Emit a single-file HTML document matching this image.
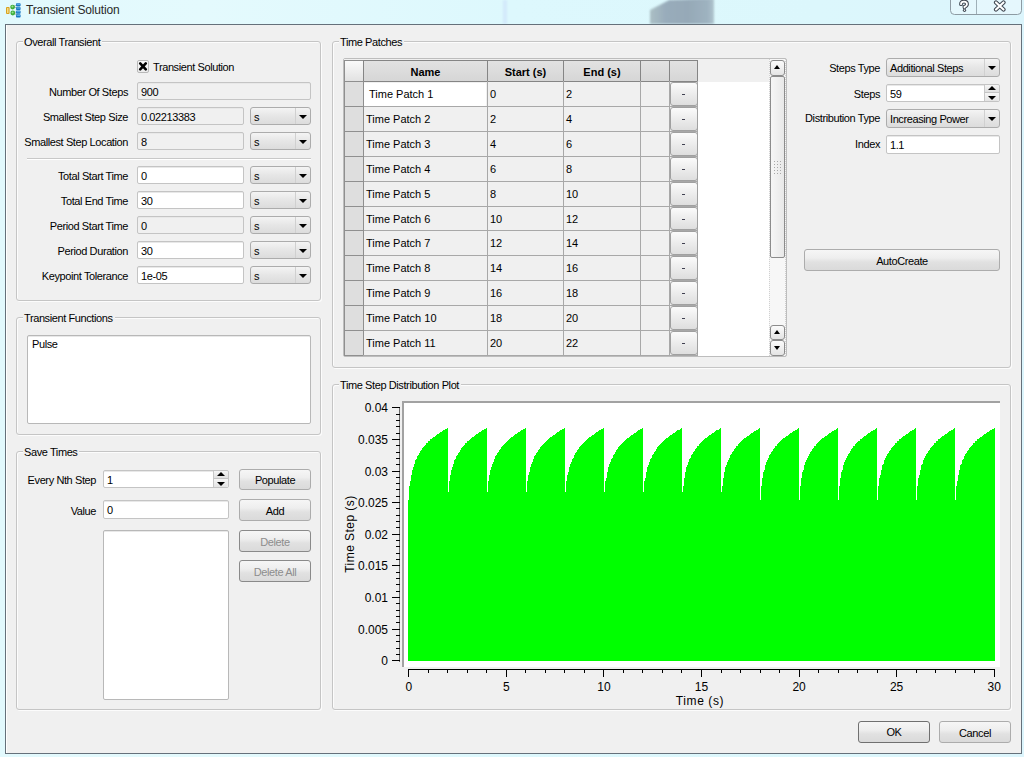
<!DOCTYPE html><html><head><meta charset="utf-8"><title>Transient Solution</title><style>
*{box-sizing:border-box;margin:0;padding:0}
html,body{width:1024px;height:757px;overflow:hidden}
body{position:relative;font-family:"Liberation Sans",sans-serif;font-size:11px;color:#000;
 background:linear-gradient(90deg,#e2f9fd 0%,#e4fafd 20%,#ddf8fd 50%,#dcf7fc 80%,#dcf5fc 100%)}
.a{position:absolute}
.t{position:absolute;white-space:nowrap;font-size:11px;line-height:13px;letter-spacing:-0.4px}
.r{text-align:right}
.win{position:absolute;left:5px;top:24px;width:1017px;height:730px;background:#f0f0f0;border:1px solid #65707a;box-shadow:inset 1px 0 0 #fff}
.gb{position:absolute;border:1px solid #c5c5c5;border-radius:3px;box-shadow:1px 1px 0 #fcfcfc, inset 1px 1px 0 #fcfcfc}
.gbt{position:absolute;background:#f0f0f0;padding:0 2px 0 1px;white-space:nowrap;line-height:13px;letter-spacing:-0.4px}
.le{position:absolute;background:#fff;border:1px solid #c4c4c4;border-radius:2px;box-shadow:inset 0 1px 0 #e8e8e8}
.le.ro{background:#f0f0f0}
.cb{position:absolute;border:1px solid #acacac;border-radius:3px;background:linear-gradient(#f4f4f4,#e6e6e6 50%,#dcdcdc)}
.cb .dv{position:absolute;top:0;bottom:0;width:1px;background:#d0d0d0}
.arr{position:absolute;width:0;height:0;border-left:3.5px solid transparent;border-right:3.5px solid transparent;border-top:4px solid #000}
.arru{position:absolute;width:0;height:0;border-left:3.5px solid transparent;border-right:3.5px solid transparent;border-bottom:4px solid #000}
.bt{position:absolute;border:1px solid #acacac;border-radius:3px;background:linear-gradient(#f6f6f6 0%,#eeeeee 40%,#e1e1e1 60%,#dadada 100%);text-align:center;white-space:nowrap;letter-spacing:-0.4px}
.bt.dis{border-color:#8a8a8a;color:#8d8d8d}
.cell{position:absolute;white-space:nowrap;letter-spacing:-0.4px;line-height:13px}
</style></head><body>
<div class="a" style="left:640px;top:-6px;width:90px;height:30px;filter:blur(1.3px);opacity:0.85"><div class="a" style="left:10px;top:0;width:64px;height:30px;background:linear-gradient(90deg,#a3b6bb,#8d9fb0 25%,#8a9cac 60%,#94a7b6 90%,#a9bcc6);clip-path:polygon(0 53%,30% 20%,100% 14%,100% 100%,0 100%)"></div></div>
<div class="a" style="left:503px;top:0;width:4px;height:24px;background:#cfe4fb;filter:blur(1px);opacity:0.7"></div>
<svg class="a" style="left:0;top:0" width="24" height="22"><rect x="6" y="7" width="3.6" height="7" rx="1" fill="#d9a21e"/><rect x="7.2" y="8" width="1.2" height="5" fill="#fbe9a0"/><path d="M12.5,7 L18,4.5 M12.5,7 L18,8 M12.5,13 L18,11.5 M12.5,13 L18,15" stroke="#9aa6a0" stroke-width="0.8"/><circle cx="12.6" cy="7.1" r="2.4" fill="#3fae3a"/><circle cx="12.4" cy="6.6" r="1" fill="#9be28f"/><circle cx="12.8" cy="13" r="2.4" fill="#3fae3a"/><circle cx="12.6" cy="12.5" r="1" fill="#9be28f"/><rect x="16" y="3.2" width="4.6" height="3.2" rx="0.8" fill="#1b78c4"/><rect x="16" y="6.9" width="4.6" height="3.2" rx="0.8" fill="#1b78c4"/><rect x="16" y="10.6" width="4.6" height="3.2" rx="0.8" fill="#1b78c4"/><rect x="16" y="14.3" width="4.6" height="3.2" rx="0.8" fill="#1b78c4"/><rect x="16.6" y="3.8" width="3.4" height="1" fill="#5fb4ea"/><rect x="16.6" y="7.5" width="3.4" height="1" fill="#5fb4ea"/><rect x="16.6" y="11.2" width="3.4" height="1" fill="#5fb4ea"/><rect x="16.6" y="14.9" width="3.4" height="1" fill="#5fb4ea"/></svg>
<div class="t" style="left:26px;top:3px;font-size:12px;line-height:14px;letter-spacing:-0.15px;color:#2a2a2a">Transient Solution</div>
<svg class="a" style="left:940px;top:0" width="84" height="24"><path d="M10.5,-2 V10.5 Q10.5,14.5 14.5,14.5 H77.5 Q81.5,14.5 81.5,10.5 V-2" fill="rgba(255,255,255,0.25)" stroke="#8d9ba3" stroke-width="1"/><path d="M36.5,0 V14" stroke="#9fb0b8" stroke-width="1"/><path d="M21,4.2 Q21,1.6 24,1.6 Q27,1.6 27,4.2 Q27,5.8 24.5,6.8 V7.6" fill="none" stroke="#3e4650" stroke-width="3.8" stroke-linecap="round"/><path d="M21,4.2 Q21,1.6 24,1.6 Q27,1.6 27,4.2 Q27,5.8 24.5,6.8 V7.6" fill="none" stroke="#fff" stroke-width="1.8" stroke-linecap="round"/><circle cx="24.5" cy="10.3" r="1.6" fill="#3e4650"/><circle cx="24.5" cy="10.3" r="0.7" fill="#fff"/><path d="M56,2.5 L63.5,9.5 M63.5,2.5 L56,9.5" stroke="#3e4650" stroke-width="4.2" stroke-linecap="round"/><path d="M56,2.5 L63.5,9.5 M63.5,2.5 L56,9.5" stroke="#fff" stroke-width="2.2" stroke-linecap="round"/></svg>
<div class="win"></div>
<div class="gb" style="left:16px;top:41px;width:305px;height:260px"></div>
<div class="gbt" style="left:23px;top:36px">Overall Transient</div>
<div class="a" style="left:137px;top:60px;width:12px;height:13px;border:1px solid #b8b8b8;border-radius:2px;background:linear-gradient(#fafafa,#ececec)"></div>
<svg class="a" style="left:137px;top:60px" width="12" height="13"><path d="M3.2,3.4 L8.8,9.4 M8.8,3.4 L3.2,9.4" stroke="#000" stroke-width="2.6" stroke-linecap="round"/></svg>
<div class="t" style="left:153px;top:61px;">Transient Solution</div>
<div class="t r" style="right:896px;top:86px;">Number Of Steps</div>
<div class="le ro" style="left:137px;top:82px;width:174px;height:18px"></div>
<div class="t" style="left:141px;top:86px;">900</div>
<div class="t r" style="right:896px;top:111px;">Smallest Step Size</div>
<div class="le ro" style="left:137px;top:107px;width:107px;height:18px"></div>
<div class="t" style="left:141px;top:111px;">0.02213383</div>
<div class="cb" style="left:250px;top:107px;width:61px;height:18px"><div class="dv" style="left:44px"></div></div>
<div class="arr" style="left:299px;top:115px;border-left-width:4px;border-right-width:4px"></div>
<div class="t" style="left:254px;top:111px;">s</div>
<div class="t r" style="right:896px;top:136px;">Smallest Step Location</div>
<div class="le ro" style="left:137px;top:132px;width:107px;height:18px"></div>
<div class="t" style="left:141px;top:136px;">8</div>
<div class="cb" style="left:250px;top:132px;width:61px;height:18px"><div class="dv" style="left:44px"></div></div>
<div class="arr" style="left:299px;top:140px;border-left-width:4px;border-right-width:4px"></div>
<div class="t" style="left:254px;top:136px;">s</div>
<div class="t r" style="right:896px;top:170px;">Total Start Time</div>
<div class="le" style="left:137px;top:166px;width:107px;height:18px"></div>
<div class="t" style="left:141px;top:170px;">0</div>
<div class="cb" style="left:250px;top:166px;width:61px;height:18px"><div class="dv" style="left:44px"></div></div>
<div class="arr" style="left:299px;top:174px;border-left-width:4px;border-right-width:4px"></div>
<div class="t" style="left:254px;top:170px;">s</div>
<div class="t r" style="right:896px;top:195px;">Total End Time</div>
<div class="le" style="left:137px;top:191px;width:107px;height:18px"></div>
<div class="t" style="left:141px;top:195px;">30</div>
<div class="cb" style="left:250px;top:191px;width:61px;height:18px"><div class="dv" style="left:44px"></div></div>
<div class="arr" style="left:299px;top:199px;border-left-width:4px;border-right-width:4px"></div>
<div class="t" style="left:254px;top:195px;">s</div>
<div class="t r" style="right:896px;top:220px;">Period Start Time</div>
<div class="le ro" style="left:137px;top:216px;width:107px;height:18px"></div>
<div class="t" style="left:141px;top:220px;">0</div>
<div class="cb" style="left:250px;top:216px;width:61px;height:18px"><div class="dv" style="left:44px"></div></div>
<div class="arr" style="left:299px;top:224px;border-left-width:4px;border-right-width:4px"></div>
<div class="t" style="left:254px;top:220px;">s</div>
<div class="t r" style="right:896px;top:245px;">Period Duration</div>
<div class="le" style="left:137px;top:241px;width:107px;height:18px"></div>
<div class="t" style="left:141px;top:245px;">30</div>
<div class="cb" style="left:250px;top:241px;width:61px;height:18px"><div class="dv" style="left:44px"></div></div>
<div class="arr" style="left:299px;top:249px;border-left-width:4px;border-right-width:4px"></div>
<div class="t" style="left:254px;top:245px;">s</div>
<div class="t r" style="right:896px;top:270px;">Keypoint Tolerance</div>
<div class="le" style="left:137px;top:266px;width:107px;height:18px"></div>
<div class="t" style="left:141px;top:270px;">1e-05</div>
<div class="cb" style="left:250px;top:266px;width:61px;height:18px"><div class="dv" style="left:44px"></div></div>
<div class="arr" style="left:299px;top:274px;border-left-width:4px;border-right-width:4px"></div>
<div class="t" style="left:254px;top:270px;">s</div>
<div class="a" style="left:27px;top:158px;width:284px;height:1px;background:#c8c8c8;box-shadow:0 1px 0 #fff"></div>
<div class="gb" style="left:16px;top:317px;width:305px;height:118px"></div>
<div class="gbt" style="left:23px;top:312px">Transient Functions</div>
<div class="le" style="left:27px;top:335px;width:284px;height:89px;border-color:#b8b8b8"></div>
<div class="t" style="left:32px;top:338px;">Pulse</div>
<div class="gb" style="left:16px;top:451px;width:305px;height:259px"></div>
<div class="gbt" style="left:23px;top:446px">Save Times</div>
<div class="t r" style="right:928px;top:474px;">Every Nth Step</div>
<div class="le" style="left:103px;top:470px;width:126px;height:18px"></div>
<div class="a" style="left:213px;top:471px;width:15px;height:8px;background:linear-gradient(#f6f6f6,#e0e0e0);border-left:1px solid #c8c8c8;border-bottom:1px solid #c4c4c4;border-radius:0 2px 0 0"></div>
<div class="a" style="left:213px;top:479px;width:15px;height:8px;background:linear-gradient(#f6f6f6,#e4e4e4);border-left:1px solid #c8c8c8;border-radius:0 0 2px 0"></div>
<div class="arru" style="left:217px;top:472px;border-left-width:4px;border-right-width:4px"></div>
<div class="arr" style="left:217px;top:482px;border-left-width:4px;border-right-width:4px"></div>
<div class="t" style="left:107px;top:474px;">1</div>
<div class="bt" style="left:239px;top:469px;width:72px;height:21px;line-height:19px;padding-top:1px">Populate</div>
<div class="t r" style="right:928px;top:505px;">Value</div>
<div class="le" style="left:103px;top:500px;width:126px;height:19px"></div>
<div class="t" style="left:107px;top:504px;">0</div>
<div class="bt" style="left:239px;top:499px;width:72px;height:22px;line-height:20px;padding-top:1px">Add</div>
<div class="le" style="left:103px;top:530px;width:126px;height:170px;border-color:#b8b8b8"></div>
<div class="bt dis" style="left:239px;top:530px;width:72px;height:22px;line-height:20px;padding-top:1px">Delete</div>
<div class="bt dis" style="left:239px;top:560px;width:72px;height:22px;line-height:20px;padding-top:1px">Delete All</div>
<div class="gb" style="left:332px;top:41px;width:679px;height:327px"></div>
<div class="gbt" style="left:339px;top:36px">Time Patches</div>
<div class="a" style="left:343px;top:58px;width:444px;height:299px;border:1px solid #bdbdbd;border-radius:2px;background:#fff"></div>
<div class="a" style="left:344px;top:59px;width:426px;height:23px;background:#f0f0f0"></div>
<div class="a" style="left:344px;top:60px;width:20px;height:22px;border:1px solid #8f8f8f;background:linear-gradient(#fafafa,#e2e2e2)"></div>
<div class="a" style="left:363px;top:60px;width:125px;height:22px;border:1px solid #858585;background:linear-gradient(#e2e2e2,#d6d6d6);font-weight:bold;text-align:center;line-height:20px;padding-top:1px;letter-spacing:0">Name</div>
<div class="a" style="left:487px;top:60px;width:77px;height:22px;border:1px solid #858585;background:linear-gradient(#e2e2e2,#d6d6d6);font-weight:bold;text-align:center;line-height:20px;padding-top:1px;letter-spacing:0">Start (s)</div>
<div class="a" style="left:563px;top:60px;width:78px;height:22px;border:1px solid #858585;background:linear-gradient(#e2e2e2,#d6d6d6);font-weight:bold;text-align:center;line-height:20px;padding-top:1px;letter-spacing:0">End (s)</div>
<div class="a" style="left:640px;top:60px;width:30px;height:22px;border:1px solid #858585;background:linear-gradient(#e2e2e2,#d6d6d6);font-weight:bold;text-align:center;line-height:20px;padding-top:1px;letter-spacing:0"></div>
<div class="a" style="left:669px;top:60px;width:29px;height:22px;border:1px solid #858585;background:linear-gradient(#e2e2e2,#d6d6d6);font-weight:bold;text-align:center;line-height:20px;padding-top:1px;letter-spacing:0"></div>
<div class="a" style="left:344px;top:81px;width:20px;height:26px;border:1px solid #8f8f8f;background:#dedede"></div>
<div class="a" style="left:364px;top:82px;width:334px;height:24px;background:#f0f0f0"></div>
<div class="a" style="left:363px;top:106px;width:335px;height:1px;background:#a8a8a8"></div>
<div class="a" style="left:487px;top:81px;width:1px;height:26px;background:#a8a8a8"></div>
<div class="a" style="left:563px;top:81px;width:1px;height:26px;background:#a8a8a8"></div>
<div class="a" style="left:640px;top:81px;width:1px;height:26px;background:#a8a8a8"></div>
<div class="a" style="left:669px;top:81px;width:1px;height:26px;background:#a8a8a8"></div>
<div class="a" style="left:697px;top:81px;width:1px;height:26px;background:#a8a8a8"></div>
<div class="a" style="left:670px;top:82px;width:28px;height:24px;border:1px solid #a0a0a0;border-radius:3px;background:linear-gradient(#fbfbfb,#ececec 50%,#dedede)"></div>
<div class="a" style="left:682px;top:94px;width:3px;height:1px;background:#404050"></div>
<div class="a" style="left:364px;top:83px;width:122px;height:23px;background:#fff;border-radius:1px"></div>
<div class="t" style="left:369px;top:88px;letter-spacing:0">Time Patch 1</div>
<div class="t" style="left:490px;top:88px;letter-spacing:0">0</div>
<div class="t" style="left:566px;top:88px;letter-spacing:0">2</div>
<div class="a" style="left:344px;top:106px;width:20px;height:26px;border:1px solid #8f8f8f;background:#dedede"></div>
<div class="a" style="left:364px;top:107px;width:334px;height:24px;background:#f0f0f0"></div>
<div class="a" style="left:363px;top:131px;width:335px;height:1px;background:#a8a8a8"></div>
<div class="a" style="left:487px;top:106px;width:1px;height:26px;background:#a8a8a8"></div>
<div class="a" style="left:563px;top:106px;width:1px;height:26px;background:#a8a8a8"></div>
<div class="a" style="left:640px;top:106px;width:1px;height:26px;background:#a8a8a8"></div>
<div class="a" style="left:669px;top:106px;width:1px;height:26px;background:#a8a8a8"></div>
<div class="a" style="left:697px;top:106px;width:1px;height:26px;background:#a8a8a8"></div>
<div class="a" style="left:670px;top:107px;width:28px;height:24px;border:1px solid #a0a0a0;border-radius:3px;background:linear-gradient(#fbfbfb,#ececec 50%,#dedede)"></div>
<div class="a" style="left:682px;top:119px;width:3px;height:1px;background:#404050"></div>
<div class="t" style="left:366px;top:113px;letter-spacing:0">Time Patch 2</div>
<div class="t" style="left:490px;top:113px;letter-spacing:0">2</div>
<div class="t" style="left:566px;top:113px;letter-spacing:0">4</div>
<div class="a" style="left:344px;top:131px;width:20px;height:26px;border:1px solid #8f8f8f;background:#dedede"></div>
<div class="a" style="left:364px;top:132px;width:334px;height:24px;background:#f0f0f0"></div>
<div class="a" style="left:363px;top:156px;width:335px;height:1px;background:#a8a8a8"></div>
<div class="a" style="left:487px;top:131px;width:1px;height:26px;background:#a8a8a8"></div>
<div class="a" style="left:563px;top:131px;width:1px;height:26px;background:#a8a8a8"></div>
<div class="a" style="left:640px;top:131px;width:1px;height:26px;background:#a8a8a8"></div>
<div class="a" style="left:669px;top:131px;width:1px;height:26px;background:#a8a8a8"></div>
<div class="a" style="left:697px;top:131px;width:1px;height:26px;background:#a8a8a8"></div>
<div class="a" style="left:670px;top:132px;width:28px;height:24px;border:1px solid #a0a0a0;border-radius:3px;background:linear-gradient(#fbfbfb,#ececec 50%,#dedede)"></div>
<div class="a" style="left:682px;top:144px;width:3px;height:1px;background:#404050"></div>
<div class="t" style="left:366px;top:138px;letter-spacing:0">Time Patch 3</div>
<div class="t" style="left:490px;top:138px;letter-spacing:0">4</div>
<div class="t" style="left:566px;top:138px;letter-spacing:0">6</div>
<div class="a" style="left:344px;top:156px;width:20px;height:26px;border:1px solid #8f8f8f;background:#dedede"></div>
<div class="a" style="left:364px;top:157px;width:334px;height:24px;background:#f0f0f0"></div>
<div class="a" style="left:363px;top:181px;width:335px;height:1px;background:#a8a8a8"></div>
<div class="a" style="left:487px;top:156px;width:1px;height:26px;background:#a8a8a8"></div>
<div class="a" style="left:563px;top:156px;width:1px;height:26px;background:#a8a8a8"></div>
<div class="a" style="left:640px;top:156px;width:1px;height:26px;background:#a8a8a8"></div>
<div class="a" style="left:669px;top:156px;width:1px;height:26px;background:#a8a8a8"></div>
<div class="a" style="left:697px;top:156px;width:1px;height:26px;background:#a8a8a8"></div>
<div class="a" style="left:670px;top:157px;width:28px;height:24px;border:1px solid #a0a0a0;border-radius:3px;background:linear-gradient(#fbfbfb,#ececec 50%,#dedede)"></div>
<div class="a" style="left:682px;top:169px;width:3px;height:1px;background:#404050"></div>
<div class="t" style="left:366px;top:163px;letter-spacing:0">Time Patch 4</div>
<div class="t" style="left:490px;top:163px;letter-spacing:0">6</div>
<div class="t" style="left:566px;top:163px;letter-spacing:0">8</div>
<div class="a" style="left:344px;top:181px;width:20px;height:26px;border:1px solid #8f8f8f;background:#dedede"></div>
<div class="a" style="left:364px;top:182px;width:334px;height:24px;background:#f0f0f0"></div>
<div class="a" style="left:363px;top:206px;width:335px;height:1px;background:#a8a8a8"></div>
<div class="a" style="left:487px;top:181px;width:1px;height:26px;background:#a8a8a8"></div>
<div class="a" style="left:563px;top:181px;width:1px;height:26px;background:#a8a8a8"></div>
<div class="a" style="left:640px;top:181px;width:1px;height:26px;background:#a8a8a8"></div>
<div class="a" style="left:669px;top:181px;width:1px;height:26px;background:#a8a8a8"></div>
<div class="a" style="left:697px;top:181px;width:1px;height:26px;background:#a8a8a8"></div>
<div class="a" style="left:670px;top:182px;width:28px;height:24px;border:1px solid #a0a0a0;border-radius:3px;background:linear-gradient(#fbfbfb,#ececec 50%,#dedede)"></div>
<div class="a" style="left:682px;top:194px;width:3px;height:1px;background:#404050"></div>
<div class="t" style="left:366px;top:188px;letter-spacing:0">Time Patch 5</div>
<div class="t" style="left:490px;top:188px;letter-spacing:0">8</div>
<div class="t" style="left:566px;top:188px;letter-spacing:0">10</div>
<div class="a" style="left:344px;top:206px;width:20px;height:25px;border:1px solid #8f8f8f;background:#dedede"></div>
<div class="a" style="left:364px;top:207px;width:334px;height:23px;background:#f0f0f0"></div>
<div class="a" style="left:363px;top:230px;width:335px;height:1px;background:#a8a8a8"></div>
<div class="a" style="left:487px;top:206px;width:1px;height:25px;background:#a8a8a8"></div>
<div class="a" style="left:563px;top:206px;width:1px;height:25px;background:#a8a8a8"></div>
<div class="a" style="left:640px;top:206px;width:1px;height:25px;background:#a8a8a8"></div>
<div class="a" style="left:669px;top:206px;width:1px;height:25px;background:#a8a8a8"></div>
<div class="a" style="left:697px;top:206px;width:1px;height:25px;background:#a8a8a8"></div>
<div class="a" style="left:670px;top:207px;width:28px;height:23px;border:1px solid #a0a0a0;border-radius:3px;background:linear-gradient(#fbfbfb,#ececec 50%,#dedede)"></div>
<div class="a" style="left:682px;top:219px;width:3px;height:1px;background:#404050"></div>
<div class="t" style="left:366px;top:213px;letter-spacing:0">Time Patch 6</div>
<div class="t" style="left:490px;top:213px;letter-spacing:0">10</div>
<div class="t" style="left:566px;top:213px;letter-spacing:0">12</div>
<div class="a" style="left:344px;top:230px;width:20px;height:26px;border:1px solid #8f8f8f;background:#dedede"></div>
<div class="a" style="left:364px;top:231px;width:334px;height:24px;background:#f0f0f0"></div>
<div class="a" style="left:363px;top:255px;width:335px;height:1px;background:#a8a8a8"></div>
<div class="a" style="left:487px;top:230px;width:1px;height:26px;background:#a8a8a8"></div>
<div class="a" style="left:563px;top:230px;width:1px;height:26px;background:#a8a8a8"></div>
<div class="a" style="left:640px;top:230px;width:1px;height:26px;background:#a8a8a8"></div>
<div class="a" style="left:669px;top:230px;width:1px;height:26px;background:#a8a8a8"></div>
<div class="a" style="left:697px;top:230px;width:1px;height:26px;background:#a8a8a8"></div>
<div class="a" style="left:670px;top:231px;width:28px;height:24px;border:1px solid #a0a0a0;border-radius:3px;background:linear-gradient(#fbfbfb,#ececec 50%,#dedede)"></div>
<div class="a" style="left:682px;top:243px;width:3px;height:1px;background:#404050"></div>
<div class="t" style="left:366px;top:237px;letter-spacing:0">Time Patch 7</div>
<div class="t" style="left:490px;top:237px;letter-spacing:0">12</div>
<div class="t" style="left:566px;top:237px;letter-spacing:0">14</div>
<div class="a" style="left:344px;top:255px;width:20px;height:26px;border:1px solid #8f8f8f;background:#dedede"></div>
<div class="a" style="left:364px;top:256px;width:334px;height:24px;background:#f0f0f0"></div>
<div class="a" style="left:363px;top:280px;width:335px;height:1px;background:#a8a8a8"></div>
<div class="a" style="left:487px;top:255px;width:1px;height:26px;background:#a8a8a8"></div>
<div class="a" style="left:563px;top:255px;width:1px;height:26px;background:#a8a8a8"></div>
<div class="a" style="left:640px;top:255px;width:1px;height:26px;background:#a8a8a8"></div>
<div class="a" style="left:669px;top:255px;width:1px;height:26px;background:#a8a8a8"></div>
<div class="a" style="left:697px;top:255px;width:1px;height:26px;background:#a8a8a8"></div>
<div class="a" style="left:670px;top:256px;width:28px;height:24px;border:1px solid #a0a0a0;border-radius:3px;background:linear-gradient(#fbfbfb,#ececec 50%,#dedede)"></div>
<div class="a" style="left:682px;top:268px;width:3px;height:1px;background:#404050"></div>
<div class="t" style="left:366px;top:262px;letter-spacing:0">Time Patch 8</div>
<div class="t" style="left:490px;top:262px;letter-spacing:0">14</div>
<div class="t" style="left:566px;top:262px;letter-spacing:0">16</div>
<div class="a" style="left:344px;top:280px;width:20px;height:26px;border:1px solid #8f8f8f;background:#dedede"></div>
<div class="a" style="left:364px;top:281px;width:334px;height:24px;background:#f0f0f0"></div>
<div class="a" style="left:363px;top:305px;width:335px;height:1px;background:#a8a8a8"></div>
<div class="a" style="left:487px;top:280px;width:1px;height:26px;background:#a8a8a8"></div>
<div class="a" style="left:563px;top:280px;width:1px;height:26px;background:#a8a8a8"></div>
<div class="a" style="left:640px;top:280px;width:1px;height:26px;background:#a8a8a8"></div>
<div class="a" style="left:669px;top:280px;width:1px;height:26px;background:#a8a8a8"></div>
<div class="a" style="left:697px;top:280px;width:1px;height:26px;background:#a8a8a8"></div>
<div class="a" style="left:670px;top:281px;width:28px;height:24px;border:1px solid #a0a0a0;border-radius:3px;background:linear-gradient(#fbfbfb,#ececec 50%,#dedede)"></div>
<div class="a" style="left:682px;top:293px;width:3px;height:1px;background:#404050"></div>
<div class="t" style="left:366px;top:287px;letter-spacing:0">Time Patch 9</div>
<div class="t" style="left:490px;top:287px;letter-spacing:0">16</div>
<div class="t" style="left:566px;top:287px;letter-spacing:0">18</div>
<div class="a" style="left:344px;top:305px;width:20px;height:26px;border:1px solid #8f8f8f;background:#dedede"></div>
<div class="a" style="left:364px;top:306px;width:334px;height:24px;background:#f0f0f0"></div>
<div class="a" style="left:363px;top:330px;width:335px;height:1px;background:#a8a8a8"></div>
<div class="a" style="left:487px;top:305px;width:1px;height:26px;background:#a8a8a8"></div>
<div class="a" style="left:563px;top:305px;width:1px;height:26px;background:#a8a8a8"></div>
<div class="a" style="left:640px;top:305px;width:1px;height:26px;background:#a8a8a8"></div>
<div class="a" style="left:669px;top:305px;width:1px;height:26px;background:#a8a8a8"></div>
<div class="a" style="left:697px;top:305px;width:1px;height:26px;background:#a8a8a8"></div>
<div class="a" style="left:670px;top:306px;width:28px;height:24px;border:1px solid #a0a0a0;border-radius:3px;background:linear-gradient(#fbfbfb,#ececec 50%,#dedede)"></div>
<div class="a" style="left:682px;top:318px;width:3px;height:1px;background:#404050"></div>
<div class="t" style="left:366px;top:312px;letter-spacing:0">Time Patch 10</div>
<div class="t" style="left:490px;top:312px;letter-spacing:0">18</div>
<div class="t" style="left:566px;top:312px;letter-spacing:0">20</div>
<div class="a" style="left:344px;top:330px;width:20px;height:26px;border:1px solid #8f8f8f;background:#dedede"></div>
<div class="a" style="left:364px;top:331px;width:334px;height:24px;background:#f0f0f0"></div>
<div class="a" style="left:363px;top:355px;width:335px;height:1px;background:#a8a8a8"></div>
<div class="a" style="left:487px;top:330px;width:1px;height:26px;background:#a8a8a8"></div>
<div class="a" style="left:563px;top:330px;width:1px;height:26px;background:#a8a8a8"></div>
<div class="a" style="left:640px;top:330px;width:1px;height:26px;background:#a8a8a8"></div>
<div class="a" style="left:669px;top:330px;width:1px;height:26px;background:#a8a8a8"></div>
<div class="a" style="left:697px;top:330px;width:1px;height:26px;background:#a8a8a8"></div>
<div class="a" style="left:670px;top:331px;width:28px;height:24px;border:1px solid #a0a0a0;border-radius:3px;background:linear-gradient(#fbfbfb,#ececec 50%,#dedede)"></div>
<div class="a" style="left:682px;top:343px;width:3px;height:1px;background:#404050"></div>
<div class="t" style="left:366px;top:337px;letter-spacing:0">Time Patch 11</div>
<div class="t" style="left:490px;top:337px;letter-spacing:0">20</div>
<div class="t" style="left:566px;top:337px;letter-spacing:0">22</div>
<div class="a" style="left:769px;top:59px;width:17px;height:297px;background:#f7f7f7;border-left:1px dotted #d0d0d0;border-right:1px dotted #d0d0d0"></div>
<div class="a" style="left:770px;top:60px;width:15px;height:16px;border:1px solid #8c8c8c;border-radius:3px;background:linear-gradient(#fbfbfb,#e4e4e4)"></div>
<div class="arru" style="left:774px;top:65px"></div>
<div class="a" style="left:770px;top:76px;width:15px;height:182px;border:1px solid #8c8c8c;border-radius:2px;background:linear-gradient(90deg,#f6f6f6,#e8e8e8)"></div>
<div class="a" style="left:773px;top:160px;width:9px;height:15px;background-image:radial-gradient(circle,#a8a8a8 0.7px,transparent 0.8px);background-size:3px 3px"></div>
<div class="a" style="left:770px;top:325px;width:15px;height:15px;border:1px solid #8c8c8c;border-radius:3px;background:linear-gradient(#fbfbfb,#e4e4e4)"></div>
<div class="arru" style="left:774px;top:330px"></div>
<div class="a" style="left:770px;top:340px;width:15px;height:16px;border:1px solid #8c8c8c;border-radius:3px;background:linear-gradient(#fbfbfb,#e4e4e4)"></div>
<div class="arr" style="left:774px;top:346px"></div>
<div class="t r" style="right:144px;top:62px;">Steps Type</div>
<div class="cb" style="left:886px;top:58px;width:114px;height:19px"><div class="dv" style="left:97px"></div></div>
<div class="arr" style="left:988px;top:66px;border-left-width:4px;border-right-width:4px"></div>
<div class="t" style="left:890px;top:62px;">Additional Steps</div>
<div class="t r" style="right:144px;top:88px;">Steps</div>
<div class="le" style="left:886px;top:84px;width:114px;height:18px"></div>
<div class="a" style="left:984px;top:85px;width:15px;height:8px;background:linear-gradient(#f6f6f6,#e0e0e0);border-left:1px solid #c8c8c8;border-bottom:1px solid #c4c4c4;border-radius:0 2px 0 0"></div>
<div class="a" style="left:984px;top:93px;width:15px;height:8px;background:linear-gradient(#f6f6f6,#e4e4e4);border-left:1px solid #c8c8c8;border-radius:0 0 2px 0"></div>
<div class="arru" style="left:988px;top:86px;border-left-width:4px;border-right-width:4px"></div>
<div class="arr" style="left:988px;top:96px;border-left-width:4px;border-right-width:4px"></div>
<div class="t" style="left:890px;top:88px;">59</div>
<div class="t r" style="right:144px;top:112px;">Distribution Type</div>
<div class="cb" style="left:886px;top:109px;width:114px;height:19px"><div class="dv" style="left:97px"></div></div>
<div class="arr" style="left:988px;top:117px;border-left-width:4px;border-right-width:4px"></div>
<div class="t" style="left:890px;top:113px;">Increasing Power</div>
<div class="t r" style="right:144px;top:138px;">Index</div>
<div class="le" style="left:886px;top:135px;width:114px;height:19px"></div>
<div class="t" style="left:890px;top:139px;">1.1</div>
<div class="bt" style="left:804px;top:249px;width:196px;height:22px;line-height:20px;padding-top:1px">AutoCreate</div>
<div class="gb" style="left:332px;top:384px;width:679px;height:326px"></div>
<div class="gbt" style="left:339px;top:379px">Time Step Distribution Plot</div>
<div class="a" style="left:402px;top:401px;width:598px;height:266px;background:#fff;border-top:2px solid #a2a2a2;border-left:2px solid #a2a2a2"></div>
<svg class="a" style="left:0;top:0" width="1024" height="757" shape-rendering="crispEdges"><path d="M408,661 V500 H409 V486 H410 V481 H411 V475 H412 V470 H413 V467 H414 V464 H415 V460 H416 V459 H417 V456 H418 V455 H419 V453 H420 V451 H421 V450 H422 V448 H423 V447 H424 V446 H425 V445 H426 V443 H427 V443 H428 V441 H429 V441 H430 V439 H431 V439 H432 V438 H433 V437 H434 V437 H435 V436 H436 V435 H437 V434 H438 V434 H439 V433 H440 V432 H441 V432 H442 V431 H443 V430 H444 V430 H445 V429 H446 V429 H447 V428 H448 V492 H449 V481 H450 V475 H451 V470 H452 V467 H453 V464 H454 V460 H455 V459 H456 V456 H457 V455 H458 V453 H459 V452 H460 V450 H461 V448 H462 V447 H463 V446 H464 V445 H465 V443 H466 V443 H467 V441 H468 V441 H469 V440 H470 V439 H471 V438 H472 V437 H473 V437 H474 V436 H475 V435 H476 V434 H477 V434 H478 V433 H479 V432 H480 V432 H481 V431 H482 V430 H483 V430 H484 V429 H485 V429 H486 V428 H487 V492 H488 V481 H489 V475 H490 V470 H491 V467 H492 V464 H493 V462 H494 V459 H495 V456 H496 V455 H497 V453 H498 V452 H499 V450 H500 V449 H501 V447 H502 V446 H503 V445 H504 V444 H505 V443 H506 V442 H507 V441 H508 V440 H509 V439 H510 V438 H511 V437 H512 V437 H513 V436 H514 V435 H515 V434 H516 V434 H517 V433 H518 V432 H519 V432 H520 V431 H521 V430 H522 V430 H523 V429 H524 V429 H525 V428 H526 V492 H527 V481 H528 V475 H529 V472 H530 V467 H531 V464 H532 V462 H533 V459 H534 V456 H535 V455 H536 V453 H537 V452 H538 V450 H539 V449 H540 V447 H541 V446 H542 V445 H543 V444 H544 V443 H545 V442 H546 V441 H547 V440 H548 V439 H549 V438 H550 V437 H551 V437 H552 V436 H553 V435 H554 V435 H555 V434 H556 V433 H557 V432 H558 V432 H559 V431 H560 V430 H561 V430 H562 V429 H563 V429 H564 V428 H565 V492 H566 V481 H567 V475 H568 V472 H569 V467 H570 V464 H571 V462 H572 V459 H573 V458 H574 V455 H575 V453 H576 V452 H577 V450 H578 V449 H579 V447 H580 V446 H581 V445 H582 V444 H583 V443 H584 V442 H585 V441 H586 V440 H587 V439 H588 V438 H589 V437 H590 V437 H591 V436 H592 V435 H593 V435 H594 V434 H595 V433 H596 V432 H597 V432 H598 V431 H599 V430 H600 V430 H601 V429 H602 V429 H603 V428 H604 V492 H605 V481 H606 V478 H607 V472 H608 V467 H609 V464 H610 V462 H611 V459 H612 V458 H613 V455 H614 V454 H615 V452 H616 V450 H617 V449 H618 V447 H619 V446 H620 V445 H621 V444 H622 V443 H623 V442 H624 V441 H625 V440 H626 V439 H627 V438 H628 V438 H629 V437 H630 V436 H631 V435 H632 V435 H633 V434 H634 V433 H635 V433 H636 V432 H637 V431 H638 V430 H639 V430 H640 V429 H641 V429 H642 V428 H643 V492 H644 V481 H645 V478 H646 V472 H647 V467 H648 V465 H649 V462 H650 V459 H651 V458 H652 V455 H653 V454 H654 V452 H655 V451 H656 V449 H657 V447 H658 V446 H659 V445 H660 V444 H661 V443 H662 V442 H663 V441 H664 V440 H665 V439 H666 V438 H667 V438 H668 V437 H669 V436 H670 V435 H671 V435 H672 V434 H673 V433 H674 V433 H675 V432 H676 V431 H677 V430 H678 V430 H679 V430 H680 V429 H681 V428 H682 V492 H683 V486 H684 V478 H685 V472 H686 V467 H687 V465 H688 V462 H689 V459 H690 V458 H691 V455 H692 V454 H693 V452 H694 V451 H695 V449 H696 V448 H697 V446 H698 V446 H699 V444 H700 V443 H701 V442 H702 V441 H703 V440 H704 V439 H705 V438 H706 V438 H707 V437 H708 V436 H709 V435 H710 V435 H711 V434 H712 V433 H713 V433 H714 V432 H715 V431 H716 V430 H717 V430 H718 V430 H719 V429 H720 V428 H721 V492 H722 V486 H723 V478 H724 V472 H725 V467 H726 V465 H727 V462 H728 V460 H729 V458 H730 V455 H731 V454 H732 V452 H733 V451 H734 V449 H735 V448 H736 V446 H737 V446 H738 V444 H739 V443 H740 V442 H741 V441 H742 V440 H743 V439 H744 V438 H745 V438 H746 V437 H747 V436 H748 V436 H749 V435 H750 V434 H751 V433 H752 V433 H753 V432 H754 V431 H755 V431 H756 V430 H757 V430 H758 V429 H759 V428 H760 V500 H761 V486 H762 V478 H763 V472 H764 V470 H765 V465 H766 V462 H767 V460 H768 V458 H769 V455 H770 V454 H771 V452 H772 V451 H773 V449 H774 V448 H775 V446 H776 V446 H777 V444 H778 V443 H779 V442 H780 V441 H781 V440 H782 V439 H783 V438 H784 V438 H785 V437 H786 V436 H787 V436 H788 V435 H789 V434 H790 V433 H791 V433 H792 V432 H793 V431 H794 V431 H795 V430 H796 V430 H797 V429 H798 V428 H799 V500 H800 V486 H801 V478 H802 V472 H803 V470 H804 V465 H805 V462 H806 V460 H807 V458 H808 V456 H809 V454 H810 V452 H811 V451 H812 V449 H813 V448 H814 V446 H815 V446 H816 V444 H817 V443 H818 V442 H819 V441 H820 V440 H821 V439 H822 V438 H823 V438 H824 V437 H825 V436 H826 V436 H827 V435 H828 V434 H829 V433 H830 V433 H831 V432 H832 V431 H833 V431 H834 V430 H835 V430 H836 V429 H837 V428 H838 V500 H839 V486 H840 V478 H841 V472 H842 V470 H843 V465 H844 V462 H845 V460 H846 V458 H847 V456 H848 V454 H849 V453 H850 V451 H851 V449 H852 V448 H853 V446 H854 V446 H855 V444 H856 V443 H857 V442 H858 V441 H859 V441 H860 V439 H861 V439 H862 V438 H863 V437 H864 V436 H865 V436 H866 V435 H867 V434 H868 V433 H869 V433 H870 V432 H871 V431 H872 V431 H873 V430 H874 V430 H875 V429 H876 V428 H877 V500 H878 V486 H879 V478 H880 V475 H881 V470 H882 V465 H883 V464 H884 V460 H885 V458 H886 V456 H887 V454 H888 V453 H889 V451 H890 V450 H891 V448 H892 V447 H893 V446 H894 V445 H895 V443 H896 V443 H897 V441 H898 V441 H899 V439 H900 V439 H901 V438 H902 V437 H903 V436 H904 V436 H905 V435 H906 V434 H907 V434 H908 V433 H909 V432 H910 V431 H911 V431 H912 V430 H913 V430 H914 V429 H915 V428 H916 V500 H917 V486 H918 V478 H919 V475 H920 V470 H921 V465 H922 V464 H923 V460 H924 V458 H925 V456 H926 V454 H927 V453 H928 V451 H929 V450 H930 V448 H931 V447 H932 V446 H933 V445 H934 V443 H935 V443 H936 V441 H937 V441 H938 V439 H939 V439 H940 V438 H941 V437 H942 V436 H943 V436 H944 V435 H945 V434 H946 V434 H947 V433 H948 V432 H949 V431 H950 V431 H951 V430 H952 V430 H953 V429 H954 V428 H955 V500 H956 V486 H957 V481 H958 V475 H959 V470 H960 V465 H961 V464 H962 V460 H963 V459 H964 V456 H965 V454 H966 V453 H967 V451 H968 V450 H969 V448 H970 V447 H971 V446 H972 V445 H973 V443 H974 V443 H975 V441 H976 V441 H977 V439 H978 V439 H979 V438 H980 V437 H981 V437 H982 V436 H983 V435 H984 V434 H985 V434 H986 V433 H987 V432 H988 V432 H989 V431 H990 V430 H991 V430 H992 V429 H993 V429 H994 V428 H995 V661 Z" fill="#00ff00"/>
<rect x="399" y="407" width="1" height="255" fill="#6a6a6a"/>
<rect x="392" y="660" width="8" height="1" fill="#000"/>
<rect x="396" y="654" width="4" height="1" fill="#000"/>
<rect x="396" y="648" width="4" height="1" fill="#000"/>
<rect x="396" y="641" width="4" height="1" fill="#000"/>
<rect x="396" y="635" width="4" height="1" fill="#000"/>
<rect x="392" y="629" width="8" height="1" fill="#000"/>
<rect x="396" y="622" width="4" height="1" fill="#000"/>
<rect x="396" y="616" width="4" height="1" fill="#000"/>
<rect x="396" y="610" width="4" height="1" fill="#000"/>
<rect x="396" y="603" width="4" height="1" fill="#000"/>
<rect x="392" y="597" width="8" height="1" fill="#000"/>
<rect x="396" y="591" width="4" height="1" fill="#000"/>
<rect x="396" y="584" width="4" height="1" fill="#000"/>
<rect x="396" y="578" width="4" height="1" fill="#000"/>
<rect x="396" y="572" width="4" height="1" fill="#000"/>
<rect x="392" y="565" width="8" height="1" fill="#000"/>
<rect x="396" y="559" width="4" height="1" fill="#000"/>
<rect x="396" y="553" width="4" height="1" fill="#000"/>
<rect x="396" y="546" width="4" height="1" fill="#000"/>
<rect x="396" y="540" width="4" height="1" fill="#000"/>
<rect x="392" y="534" width="8" height="1" fill="#000"/>
<rect x="396" y="527" width="4" height="1" fill="#000"/>
<rect x="396" y="521" width="4" height="1" fill="#000"/>
<rect x="396" y="515" width="4" height="1" fill="#000"/>
<rect x="396" y="508" width="4" height="1" fill="#000"/>
<rect x="392" y="502" width="8" height="1" fill="#000"/>
<rect x="396" y="496" width="4" height="1" fill="#000"/>
<rect x="396" y="489" width="4" height="1" fill="#000"/>
<rect x="396" y="483" width="4" height="1" fill="#000"/>
<rect x="396" y="477" width="4" height="1" fill="#000"/>
<rect x="392" y="471" width="8" height="1" fill="#000"/>
<rect x="396" y="464" width="4" height="1" fill="#000"/>
<rect x="396" y="458" width="4" height="1" fill="#000"/>
<rect x="396" y="452" width="4" height="1" fill="#000"/>
<rect x="396" y="445" width="4" height="1" fill="#000"/>
<rect x="392" y="439" width="8" height="1" fill="#000"/>
<rect x="396" y="433" width="4" height="1" fill="#000"/>
<rect x="396" y="426" width="4" height="1" fill="#000"/>
<rect x="396" y="420" width="4" height="1" fill="#000"/>
<rect x="396" y="414" width="4" height="1" fill="#000"/>
<rect x="392" y="407" width="8" height="1" fill="#000"/>
<rect x="408" y="669" width="587" height="1" fill="#000"/>
<rect x="408" y="669" width="1" height="8" fill="#000"/>
<rect x="428" y="669" width="1" height="4" fill="#000"/>
<rect x="447" y="669" width="1" height="4" fill="#000"/>
<rect x="467" y="669" width="1" height="4" fill="#000"/>
<rect x="486" y="669" width="1" height="4" fill="#000"/>
<rect x="506" y="669" width="1" height="8" fill="#000"/>
<rect x="525" y="669" width="1" height="4" fill="#000"/>
<rect x="545" y="669" width="1" height="4" fill="#000"/>
<rect x="564" y="669" width="1" height="4" fill="#000"/>
<rect x="584" y="669" width="1" height="4" fill="#000"/>
<rect x="603" y="669" width="1" height="8" fill="#000"/>
<rect x="623" y="669" width="1" height="4" fill="#000"/>
<rect x="642" y="669" width="1" height="4" fill="#000"/>
<rect x="662" y="669" width="1" height="4" fill="#000"/>
<rect x="681" y="669" width="1" height="4" fill="#000"/>
<rect x="701" y="669" width="1" height="8" fill="#000"/>
<rect x="721" y="669" width="1" height="4" fill="#000"/>
<rect x="740" y="669" width="1" height="4" fill="#000"/>
<rect x="760" y="669" width="1" height="4" fill="#000"/>
<rect x="779" y="669" width="1" height="4" fill="#000"/>
<rect x="799" y="669" width="1" height="8" fill="#000"/>
<rect x="818" y="669" width="1" height="4" fill="#000"/>
<rect x="838" y="669" width="1" height="4" fill="#000"/>
<rect x="857" y="669" width="1" height="4" fill="#000"/>
<rect x="877" y="669" width="1" height="4" fill="#000"/>
<rect x="896" y="669" width="1" height="8" fill="#000"/>
<rect x="916" y="669" width="1" height="4" fill="#000"/>
<rect x="935" y="669" width="1" height="4" fill="#000"/>
<rect x="955" y="669" width="1" height="4" fill="#000"/>
<rect x="974" y="669" width="1" height="4" fill="#000"/>
<rect x="994" y="669" width="1" height="8" fill="#000"/>
</svg>
<div class="t r" style="right:636px;top:654.3px;font-size:12px;line-height:14px;letter-spacing:0">0</div>
<div class="t r" style="right:636px;top:622.7px;font-size:12px;line-height:14px;letter-spacing:0">0.005</div>
<div class="t r" style="right:636px;top:591.0px;font-size:12px;line-height:14px;letter-spacing:0">0.01</div>
<div class="t r" style="right:636px;top:559.4px;font-size:12px;line-height:14px;letter-spacing:0">0.015</div>
<div class="t r" style="right:636px;top:527.8px;font-size:12px;line-height:14px;letter-spacing:0">0.02</div>
<div class="t r" style="right:636px;top:496.1px;font-size:12px;line-height:14px;letter-spacing:0">0.025</div>
<div class="t r" style="right:636px;top:464.5px;font-size:12px;line-height:14px;letter-spacing:0">0.03</div>
<div class="t r" style="right:636px;top:432.9px;font-size:12px;line-height:14px;letter-spacing:0">0.035</div>
<div class="t r" style="right:636px;top:401.3px;font-size:12px;line-height:14px;letter-spacing:0">0.04</div>
<div class="t" style="left:388.8px;width:40px;text-align:center;top:680px;font-size:12px;line-height:14px;letter-spacing:0">0</div>
<div class="t" style="left:486.4px;width:40px;text-align:center;top:680px;font-size:12px;line-height:14px;letter-spacing:0">5</div>
<div class="t" style="left:583.9px;width:40px;text-align:center;top:680px;font-size:12px;line-height:14px;letter-spacing:0">10</div>
<div class="t" style="left:681.5px;width:40px;text-align:center;top:680px;font-size:12px;line-height:14px;letter-spacing:0">15</div>
<div class="t" style="left:779.1px;width:40px;text-align:center;top:680px;font-size:12px;line-height:14px;letter-spacing:0">20</div>
<div class="t" style="left:876.6px;width:40px;text-align:center;top:680px;font-size:12px;line-height:14px;letter-spacing:0">25</div>
<div class="t" style="left:974.2px;width:40px;text-align:center;top:680px;font-size:12px;line-height:14px;letter-spacing:0">30</div>
<div class="t" style="left:650px;width:100px;text-align:center;top:694px;font-size:12px;line-height:14px;letter-spacing:0.6px">Time (s)</div>
<div class="t" style="left:300px;width:100px;text-align:center;top:527px;font-size:12px;line-height:14px;letter-spacing:0.45px;transform:rotate(-90deg)">Time Step (s)</div>
<div class="bt" style="left:858px;top:721px;width:72px;height:22px;line-height:20px;border-color:#707070">OK</div>
<div class="bt" style="left:939px;top:721px;width:72px;height:22px;line-height:20px;padding-top:1px">Cancel</div>
</body></html>
